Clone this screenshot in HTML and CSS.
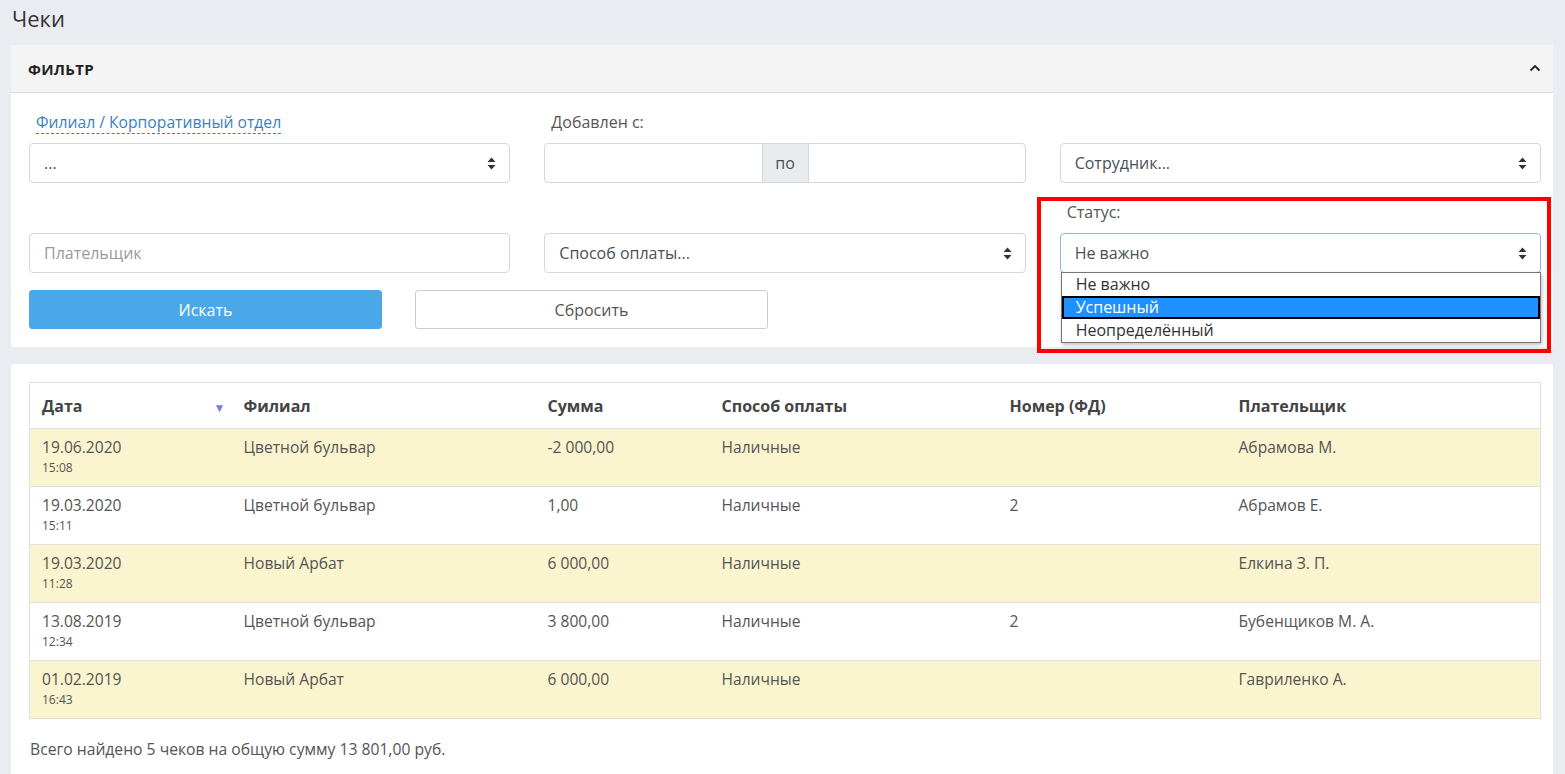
FILE: index.html
```html
<!DOCTYPE html>
<html lang="ru">
<head>
    <meta charset="UTF-8">
    <title>Чеки</title>
    <link rel="stylesheet" href="styles.css">
</head>
<body>
    <h1 class="page-title">Чеки</h1>

    <div class="card filter-card">
        <div class="card-header">
            <span>ФИЛЬТР</span>
            <svg class="chevron" width="12" height="8" viewBox="0 0 12 8"><path d="M1.5 6.5 L6 2 L10.5 6.5" fill="none" stroke="#222" stroke-width="1.8"/></svg>
        </div>
        <div class="card-body">
            <div class="filter-grid">
                <div class="field">
                    <a class="label link">Филиал / Корпоративный отдел</a>
                    <div class="control select"><span>...</span>
                        <svg class="arrows" width="9" height="13" viewBox="0 0 9 13"><path d="M4.5 0.5 L8.5 5 H0.5 Z M0.5 8 H8.5 L4.5 12.5 Z" fill="#333"/></svg>
                    </div>
                </div>
                <div class="field">
                    <div class="label">Добавлен с:</div>
                    <div class="date-range">
                        <div class="control date"></div>
                        <div class="addon">по</div>
                        <div class="control date"></div>
                    </div>
                </div>
                <div class="field">
                    <div class="label">&nbsp;</div>
                    <div class="control select"><span>Сотрудник...</span>
                        <svg class="arrows" width="9" height="13" viewBox="0 0 9 13"><path d="M4.5 0.5 L8.5 5 H0.5 Z M0.5 8 H8.5 L4.5 12.5 Z" fill="#333"/></svg>
                    </div>
                </div>

                <div class="field">
                    <div class="label">&nbsp;</div>
                    <div class="control placeholder">Плательщик</div>
                </div>
                <div class="field">
                    <div class="label">&nbsp;</div>
                    <div class="control select"><span>Способ оплаты...</span>
                        <svg class="arrows" width="9" height="13" viewBox="0 0 9 13"><path d="M4.5 0.5 L8.5 5 H0.5 Z M0.5 8 H8.5 L4.5 12.5 Z" fill="#333"/></svg>
                    </div>
                </div>
                <div class="field status-field">
                    <div class="label">Статус:</div>
                    <div class="control select focused"><span>Не важно</span>
                        <svg class="arrows" width="9" height="13" viewBox="0 0 9 13"><path d="M4.5 0.5 L8.5 5 H0.5 Z M0.5 8 H8.5 L4.5 12.5 Z" fill="#333"/></svg>
                    </div>
                    <ul class="dropdown">
                        <li>Не важно</li>
                        <li class="active">Успешный</li>
                        <li>Неопределённый</li>
                    </ul>
                    <div class="highlight"></div>
                </div>
            </div>
            <div class="buttons">
                <button class="btn btn-primary">Искать</button>
                <button class="btn btn-default">Сбросить</button>
            </div>
        </div>
    </div>

    <div class="card table-card">
        <table class="receipts">
            <thead>
                <tr>
                    <th class="col-date">Дата <span class="sort">&#9660;</span></th>
                    <th class="col-branch">Филиал</th>
                    <th class="col-sum">Сумма</th>
                    <th class="col-pay">Способ оплаты</th>
                    <th class="col-num">Номер (ФД)</th>
                    <th>Плательщик</th>
                </tr>
            </thead>
            <tbody>
                <tr>
                    <td>19.06.2020<small>15:08</small></td>
                    <td>Цветной бульвар</td>
                    <td>-2 000,00</td>
                    <td>Наличные</td>
                    <td></td>
                    <td>Абрамова М.</td>
                </tr>
                <tr>
                    <td>19.03.2020<small>15:11</small></td>
                    <td>Цветной бульвар</td>
                    <td>1,00</td>
                    <td>Наличные</td>
                    <td>2</td>
                    <td>Абрамов Е.</td>
                </tr>
                <tr>
                    <td>19.03.2020<small>11:28</small></td>
                    <td>Новый Арбат</td>
                    <td>6 000,00</td>
                    <td>Наличные</td>
                    <td></td>
                    <td>Елкина З. П.</td>
                </tr>
                <tr>
                    <td>13.08.2019<small>12:34</small></td>
                    <td>Цветной бульвар</td>
                    <td>3 800,00</td>
                    <td>Наличные</td>
                    <td>2</td>
                    <td>Бубенщиков М. А.</td>
                </tr>
                <tr>
                    <td>01.02.2019<small>16:43</small></td>
                    <td>Новый Арбат</td>
                    <td>6 000,00</td>
                    <td>Наличные</td>
                    <td></td>
                    <td>Гавриленко А.</td>
                </tr>
            </tbody>
        </table>
        <p class="total">Всего найдено 5 чеков на общую сумму 13 801,00 руб.</p>
    </div>
</body>
</html>
```

FILE: styles.css
```css
* {
    margin: 0;
    padding: 0;
    box-sizing: border-box;
}

body {
    font-family: 'Open Sans', 'Liberation Sans', sans-serif;
    background: #e9ecf1;
    color: #555;
    font-size: 16px;
    padding: 0 12px 0 11px;
    overflow: hidden;
    height: 774px;
}

.page-title {
    font-size: 22px;
    font-weight: 400;
    color: #333;
    line-height: 30px;
    padding: 3px 0 0 1px;
    height: 45px;
}

.card {
    background: #fff;
    border-radius: 3px;
}

.card-header {
    height: 48px;
    background: #f4f4f4;
    border-bottom: 1px solid #dcdcdc;
    display: flex;
    align-items: center;
    justify-content: space-between;
    padding: 0 12px 0 17px;
    font-size: 15px;
    font-weight: 700;
    color: #222;
    letter-spacing: 0.3px;
}

.chevron {
    margin-top: -2px;
}

.card-body {
    padding: 10px 12px 18px 18px;
}

.filter-grid {
    display: grid;
    grid-template-columns: repeat(3, 1fr);
    column-gap: 34px;
    row-gap: 10px;
}

.field {
    display: flex;
    flex-direction: column;
    position: relative;
}

.label {
    height: 40px;
    line-height: 38px;
    padding-left: 7px;
    font-size: 16px;
    color: #555;
}

.link {
    color: #3a7fc1;
    align-self: flex-start;
    font-size: 15.7px;
    line-height: 22px;
    height: 23px;
    margin: 8px 0 9px 7px;
    border-bottom: 1px dashed #3a7fc1;
    padding-left: 0;
}

.control {
    height: 40px;
    border: 1px solid #d4d7db;
    border-radius: 4px;
    background: #fff;
    padding: 0 14px;
    display: flex;
    align-items: center;
    color: #495057;
    font-size: 16px;
}

.control.placeholder {
    color: #999;
}

.control.focused {
    border-color: #88b8e8;
}

.select {
    justify-content: space-between;
}

.select .arrows {
    margin-right: -1px;
}

.date-range {
    display: flex;
}

.date-range .date {
    flex: 1;
}

.date-range .date:first-child {
    border-radius: 4px 0 0 4px;
}

.date-range .date:last-child {
    border-radius: 0 4px 4px 0;
}

.addon {
    width: 45px;
    height: 40px;
    background: #e9ecef;
    border: 1px solid #d4d7db;
    border-left: none;
    border-right: none;
    display: flex;
    align-items: center;
    justify-content: center;
    color: #495057;
}

.dropdown {
    position: absolute;
    left: 1px;
    right: 0;
    top: 79px;
    list-style: none;
    background: #fff;
    border: 1px solid #767676;
    box-shadow: 1px 2px 4px rgba(0, 0, 0, 0.25);
    z-index: 5;
    font-size: 16px;
    color: #333;
}

.dropdown li {
    height: 23px;
    line-height: 22px;
    padding-left: 14px;
}

.dropdown li.active {
    background: #1e90ff;
    color: #fff;
    outline: 2px solid #000;
    outline-offset: -2px;
}

.highlight {
    position: absolute;
    left: -23px;
    right: -10px;
    top: 4px;
    bottom: -80px;
    border: 4px solid #ff0000;
    z-index: 6;
    pointer-events: none;
}

.buttons {
    display: flex;
    gap: 33px;
    margin-top: 17px;
}

.btn {
    width: 353px;
    height: 39px;
    border-radius: 3px;
    font-family: inherit;
    font-size: 16px;
}

.btn-primary {
    background: #4aa8e8;
    border: 1px solid #4aa8e8;
    color: #fff;
}

.btn-default {
    background: #fff;
    border: 1px solid #ccc;
    color: #555;
}

.table-card {
    margin-top: 17px;
    padding: 18px 12px 20px 18px;
    min-height: 420px;
}

.receipts {
    width: 100%;
    border-collapse: collapse;
    border: 1px solid #e0e0e0;
}

.receipts th {
    height: 46px;
    text-align: left;
    font-size: 16px;
    font-weight: 700;
    color: #444;
    padding: 0 12px;
    border-bottom: 1px solid #e0e0e0;
}

.col-date { width: 202px; }
.col-branch { width: 304px; }
.col-sum { width: 174px; }
.col-pay { width: 288px; }
.col-num { width: 229px; }

.sort {
    float: right;
    color: #7a7fd6;
    font-size: 12px;
    margin: 4px -6px 0 0;
}

.receipts td {
    height: 58px;
    vertical-align: top;
    padding: 7px 12px 0;
    font-size: 15.6px;
    color: #555;
    border-top: 1px solid #e0e0e0;
}

.receipts small {
    display: block;
    font-size: 12px;
    line-height: 14px;
    margin-top: 3px;
}

.receipts tbody tr:nth-child(odd) {
    background: #faf4cf;
}

.total {
    margin-top: 19px;
    font-size: 15.7px;
    color: #555;
    padding-left: 1px;
}
```
